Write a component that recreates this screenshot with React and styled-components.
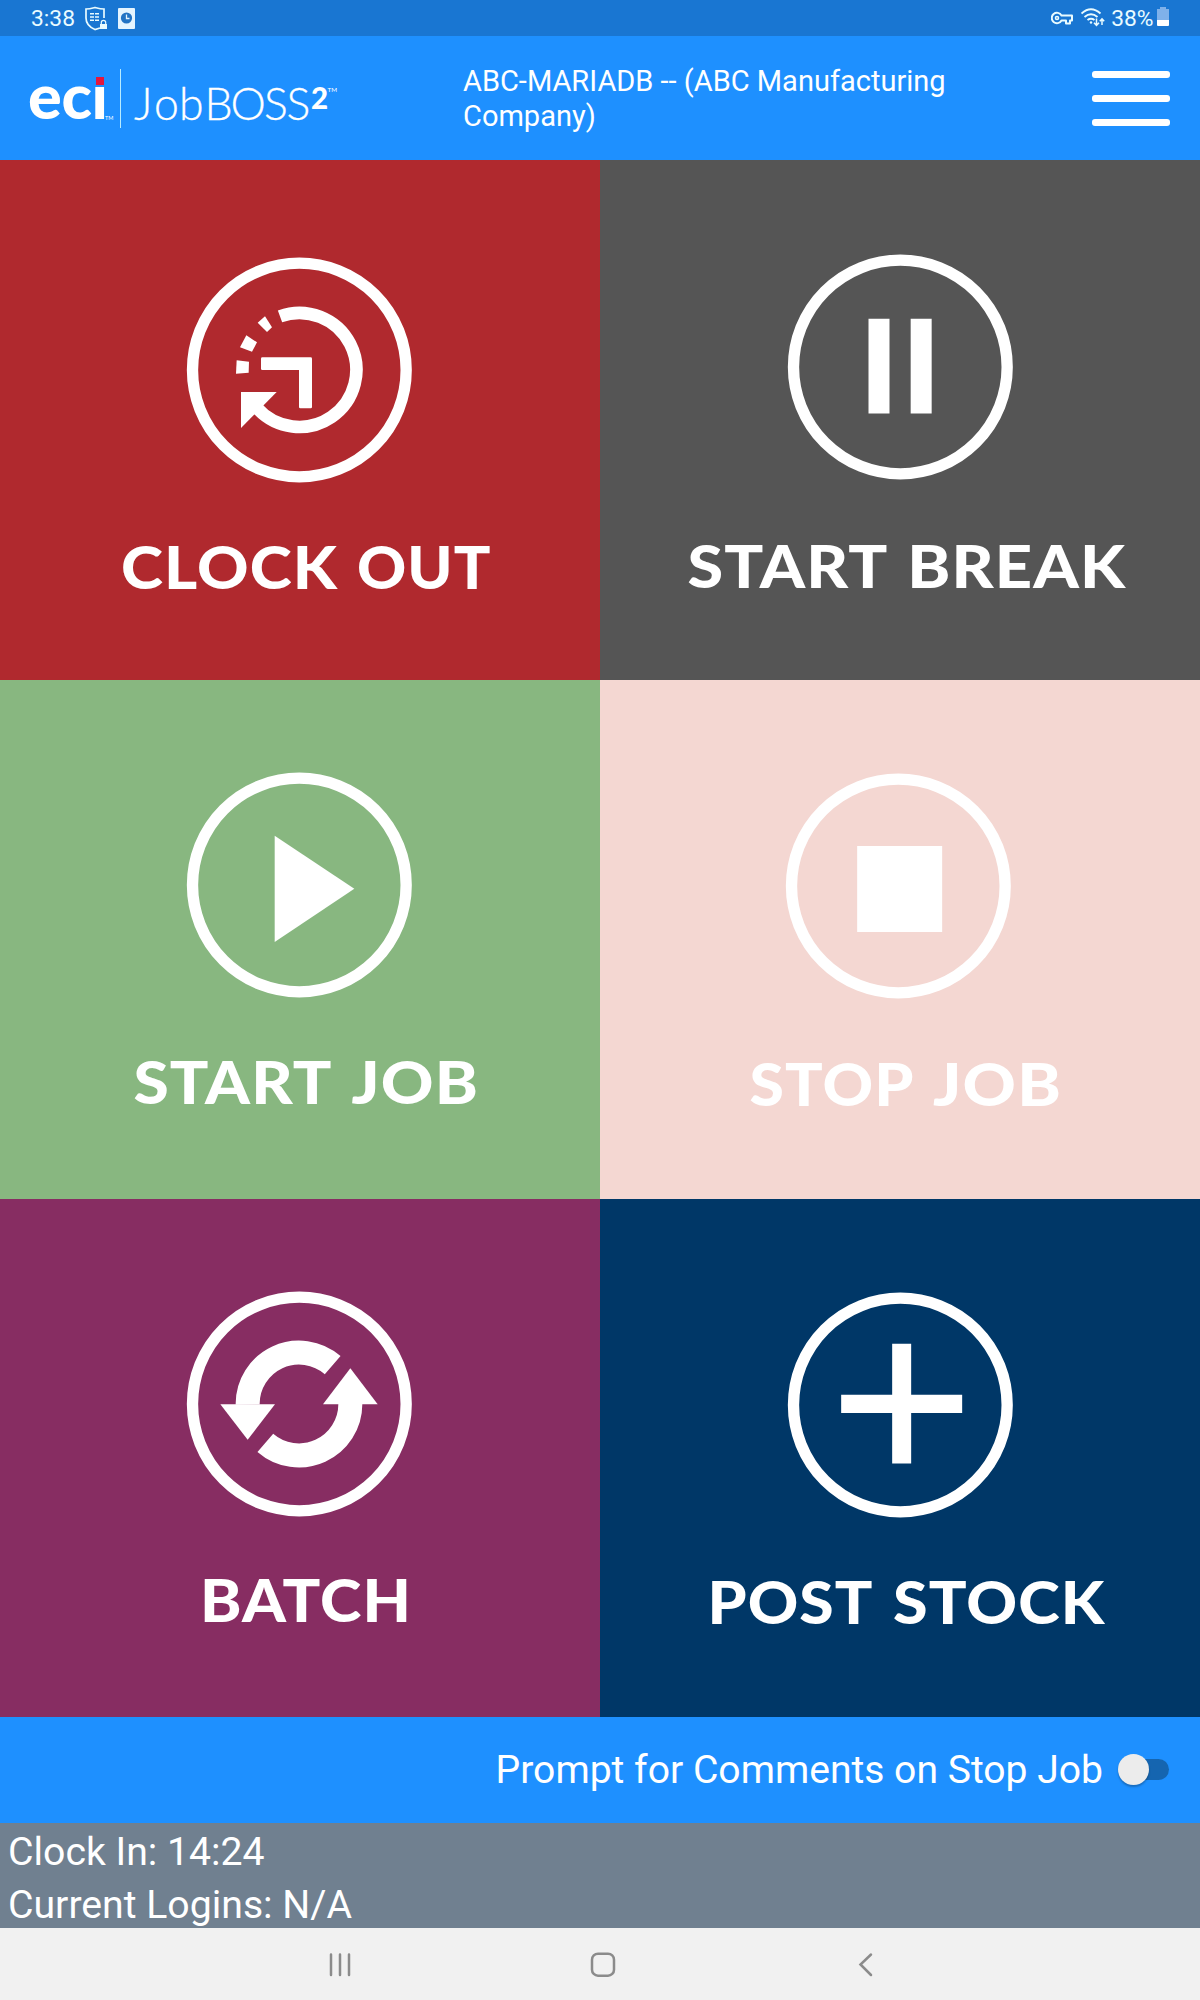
import React, { useState } from "react";
import styled, { createGlobalStyle } from "styled-components";

const GlobalStyle = createGlobalStyle`
  * {
    box-sizing: border-box;
  }

  body {
    margin: 0;
    font-family: Roboto, "Liberation Sans", sans-serif;
    color: #fff;
  }
`;

const Screen = styled.div`
  display: flex;
  flex-direction: column;
  width: 1200px;
  height: 2000px;
  overflow: hidden;
`;

const StatusBar = styled.div`
  display: flex;
  justify-content: space-between;
  height: 36px;
  padding: 0 31px;
  background-color: #1976d2;
  color: #e9fbff;
  font-size: 22.8px;
  line-height: 38px;
`;

const StatusGroup = styled.div`
  display: flex;
  align-items: flex-start;
`;

const StatusIcon = styled.svg`
  display: block;
  flex: none;
  height: 36px;
  margin-left: ${(props) => props.$gap || 0}px;
`;

const BatteryLevel = styled.span`
  margin-left: 6px;
`;

const Header = styled.header`
  display: flex;
  height: 124px;
  background-color: #1e90ff;
`;

const Logo = styled.svg`
  display: block;
  flex: none;
  width: 463px;
  height: 124px;
`;

const Company = styled.div`
  width: 500px;
  padding-top: 28px;
  font-size: 29px;
  line-height: 35.3px;
`;

const MenuButton = styled.button`
  display: flex;
  flex-direction: column;
  gap: 17px;
  width: 78px;
  margin: 35px 30px 0 auto;
  padding: 0;
  border: none;
  background: none;
  cursor: pointer;
`;

const MenuLine = styled.span`
  height: 7px;
  border-radius: 3px;
  background-color: #fff;
`;

const Tiles = styled.main`
  display: grid;
  grid-template-columns: 600px 600px;
  grid-template-rows: 520px 519px 518px;
`;

const Tile = styled.button`
  display: flex;
  flex-direction: column;
  align-items: flex-start;
  padding: ${(props) => props.$top}px 0 0;
  border: none;
  background-color: ${(props) => props.$color};
  cursor: pointer;
`;

const TileIcon = styled.svg`
  display: block;
  width: 230px;
  height: 230px;
  margin-left: ${(props) => props.$left}px;
`;

const TileLabel = styled.svg`
  display: block;
  width: 600px;
  height: 90px;
  margin-top: ${(props) => props.$gap}px;
  overflow: visible;
  font-family: Lato, sans-serif;
  font-size: 58.5px;
  font-weight: 900;
  letter-spacing: 1px;
  fill: #fff;
`;

const PromptBar = styled.div`
  display: flex;
  justify-content: flex-end;
  height: 106px;
  padding: 27px 31px 0 0;
  background-color: #1e90ff;
  font-size: 39.1px;
  line-height: 53px;
`;

const Switch = styled.button`
  display: flex;
  align-items: center;
  width: 51px;
  height: 31px;
  margin: 10px 0 0 15px;
  padding: 0;
  border: none;
  background: none;
  cursor: pointer;
`;

const Track = styled.span`
  display: flex;
  align-items: center;
  width: 46px;
  height: 21px;
  margin-left: 5px;
  border-radius: 11px;
  background-color: #1565b0;
`;

const Thumb = styled.span`
  flex: none;
  width: 31px;
  height: 31px;
  margin-left: ${(props) => (props.$on ? 15 : -5)}px;
  border-radius: 50%;
  background-color: #ececec;
  box-shadow: 0 2px 2px rgba(0, 0, 0, 0.25);
`;

const Info = styled.div`
  height: 105px;
  padding: 3px 0 0 8px;
  background-color: #708090;
  font-size: 39.2px;
  line-height: 53px;
`;

const NavBar = styled.nav`
  display: flex;
  justify-content: center;
  gap: 233px;
  height: 72px;
  padding: 21px 0 0 5px;
  background-color: #f1f1f1;
`;

const NavIcon = styled.svg`
  display: block;
  width: 30px;
  height: 30px;
  fill: none;
  stroke: #8b8b8b;
  stroke-width: 2.5;
  stroke-linecap: round;
`;

const ClockOutGlyph = () => (
  <>
    <path d="M-58 -161 A171 171 0 1 1 -128 113" fill="none" stroke="#fff" strokeWidth="38" />
    <path d="M-175 66 H-68 L-175 174 Z" />
    <path d="M-125 -142 L-103 -161 L-82 -128 L-97 -114 Z" />
    <path d="M-159 -104 L-127 -83 L-142 -55 L-178 -68 Z" />
    <path d="M-188 -29 L-151 -25 L-152 8 L-190 11 Z" />
    <path d="M-111 -38 H34 Q38 -38 38 -34 V111 Q38 115 34 115 H3 Q-1 115 -1 111 V0 H-111 Q-115 0 -115 -4 V-34 Q-115 -38 -111 -38 Z" />
  </>
);

const BatchGlyph = () => (
  <>
    <g fill="none" stroke="#fff" strokeWidth="72">
      <path d="M100 -116.5 A154 154 0 0 0 -155 2" />
      <path d="M-102 116.5 A154 154 0 0 0 153 0" />
    </g>
    <path d="M-237 1 H-73 L-155 107 Z" />
    <path d="M71 1 H235 L153 -107 Z" />
  </>
);

const tiles = [
  {
    id: "clock-out",
    words: [
      { text: "CLOCK", x: 121, width: 217 },
      { text: "OUT", x: 357, width: 134.5 },
    ],
    color: "#b0292e",
    top: 94.5,
    left: 184,
    gap: 35.5,
    glyph: <ClockOutGlyph />,
  },
  {
    id: "start-break",
    words: [
      { text: "START", x: 87.5, width: 201 },
      { text: "BREAK", x: 307.3, width: 219 },
    ],
    color: "#555555",
    top: 92,
    left: 184.8,
    gap: 37,
    glyph: <path d="M-95.5 -144.5 H-32.5 V139.5 H-95.5 Z M31 -144.5 H94 V139.5 H31 Z" />,
  },
  {
    id: "start-job",
    words: [
      { text: "START", x: 133.5, width: 199 },
      { text: "JOB", x: 351.5, width: 127.5 },
    ],
    color: "#88b780",
    top: 90,
    left: 184,
    gap: 35,
    glyph: <path d="M-74 -148 L165 11 L-74 171 Z" />,
  },
  {
    id: "stop-job",
    words: [
      { text: "STOP", x: 149.5, width: 165 },
      { text: "JOB", x: 333, width: 129 },
    ],
    color: "#f4d7d2",
    top: 91,
    left: 183,
    gap: 36,
    glyph: <path d="M-123.5 -120 H131.5 V138 H-123.5 Z" />,
  },
  {
    id: "batch",
    words: [{ text: "BATCH", x: 200, width: 212 }],
    color: "#872d62",
    top: 90,
    left: 184,
    gap: 34,
    glyph: <BatchGlyph />,
  },
  {
    id: "post-stock",
    words: [
      { text: "POST", x: 107.5, width: 166 },
      { text: "STOCK", x: 293, width: 212.5 },
    ],
    color: "#003767",
    top: 90.5,
    left: 184.5,
    gap: 35.5,
    glyph: (
      <path d="M-24.5 -183.5 H32.5 V-31 H185.5 V24 H32.5 V175.5 H-24.5 V24 H-177.5 V-31 H-24.5 Z" />
    ),
  },
];

const ActionTile = ({ tile }) => (
  <Tile $color={tile.color} $top={tile.top}>
    <TileIcon $left={tile.left} viewBox="-346 -345 690 690" fill="#fff">
      <circle r="320.5" fill="none" stroke="#fff" strokeWidth="34" />
      {tile.glyph}
    </TileIcon>
    <TileLabel $gap={tile.gap}>
      {tile.words.map((word) => (
        <text
          key={word.text}
          x={word.x}
          y="69"
          textLength={word.width}
          lengthAdjust="spacingAndGlyphs"
        >
          {word.text}
        </text>
      ))}
    </TileLabel>
  </Tile>
);

const BrandLogo = () => (
  <Logo viewBox="0 36 463 124" fill="#fff" fontFamily="Lato, sans-serif">
    <text x="28 61.5 91.6" y="119" fontSize="63" fontWeight="900">
      eci
    </text>
    <rect x="92" y="66" width="16" height="21" fill="#1e90ff" />
    <rect x="96" y="77" width="8" height="8" fill="#e4173e" />
    <text x="105" y="119.5" fontSize="5.5">
      TM
    </text>
    <rect x="120" y="69" width="1" height="59" fill="#b8ecff" />
    <text
      x="134 154 179 204.5 230.5 264 286.5"
      y="119.5"
      fontSize="44.6"
      fontWeight="300"
      stroke="#fff"
      strokeWidth="0.3"
    >
      JobBOSS
    </text>
    <text x="311" y="108.7" fontSize="29.5" fontWeight="900">
      2
    </text>
    <text x="327.5" y="92" fontSize="6.3">
      TM
    </text>
  </Logo>
);

const App = () => {
  const [prompt, setPrompt] = useState(false);

  return (
    <Screen>
      <GlobalStyle />
      <StatusBar>
        <StatusGroup>
          <span>3:38</span>
          <StatusIcon $gap={10.5} width="22" viewBox="86 0 22 36" fill="none" stroke="#e9fbff">
            <path
              d="M101 28 L96 29.5 C90 27 87 23 87 18 V9 C91 9 94 8 96 7.5 C98 8 101 9 105 9 V18"
              strokeWidth="1.7"
            />
            <path d="M91 13.7 H101 M91 17 H101 M91 20.3 H101" strokeWidth="1.6" strokeDasharray="4 1" />
            <path d="M102.3 24 V22.5 A2.2 2.2 0 0 1 106.7 22.5 V24" strokeWidth="1.2" />
            <rect x="101" y="24" width="7" height="5" fill="#e9fbff" stroke="none" />
          </StatusIcon>
          <StatusIcon $gap={11} width="17" viewBox="119 0 17 36">
            <rect x="119" y="8" width="17" height="21" rx="1" fill="#e4f4ff" />
            <circle cx="127.5" cy="18" r="5.6" fill="#2273c4" />
            <path d="M127.5 14.5 V18.5 H130.5" fill="none" stroke="#e4f4ff" strokeWidth="1.3" />
          </StatusIcon>
        </StatusGroup>
        <StatusGroup>
          <StatusIcon width="22" viewBox="1051 0 22 36" fill="none" stroke="#e9fbff">
            <path
              d="M1061.5 15.5 H1072 V20.5 H1070 V23.5 H1066 V20.5 H1061.5 A5.2 5.2 0 1 1 1061.5 15.5 Z"
              strokeWidth="2"
              strokeLinejoin="round"
            />
            <circle cx="1057" cy="18" r="1.5" strokeWidth="1.6" />
          </StatusIcon>
          <StatusIcon $gap={8} width="24" viewBox="1081 0 24 36" fill="none" stroke="#e9fbff">
            <path
              d="M1081.5 13.5 Q1091 5 1100.5 13.5 M1084.5 17 Q1091 11.5 1097.5 17 M1087.5 20 Q1091 17.5 1094.5 20"
              strokeWidth="1.9"
            />
            <circle cx="1091" cy="22.5" r="1.2" fill="#e9fbff" stroke="none" />
            <path
              d="M1096.5 18.5 V25 M1094 22.7 L1096.5 25.3 L1099 22.7 M1102 25 V19 M1099.8 21.3 L1102 18.8 L1104.2 21.3"
              strokeWidth="1.5"
            />
          </StatusIcon>
          <BatteryLevel>38%</BatteryLevel>
          <StatusIcon $gap={3.5} width="12" viewBox="1157 0 12 36">
            <path d="M1160 7 H1166 V9 H1169 V20 H1157 V9 H1160 Z" fill="#7fb1ea" />
            <path d="M1157 20 H1169 V25 Q1169 26 1168 26 H1158 Q1157 26 1157 25 Z" fill="#fff" />
          </StatusIcon>
        </StatusGroup>
      </StatusBar>

      <Header>
        <BrandLogo />
        <Company>ABC-MARIADB -- (ABC Manufacturing Company)</Company>
        <MenuButton aria-label="Menu">
          <MenuLine />
          <MenuLine />
          <MenuLine />
        </MenuButton>
      </Header>

      <Tiles>
        {tiles.map((tile) => (
          <ActionTile key={tile.id} tile={tile} />
        ))}
      </Tiles>

      <PromptBar>
        <span>Prompt for Comments on Stop Job</span>
        <Switch role="switch" aria-checked={prompt} onClick={() => setPrompt(!prompt)}>
          <Track>
            <Thumb $on={prompt} />
          </Track>
        </Switch>
      </PromptBar>

      <Info>
        <div>Clock In: 14:24</div>
        <div>Current Logins: N/A</div>
      </Info>

      <NavBar>
        <NavIcon viewBox="0 0 30 30">
          <path d="M6 5.5 V26 M15 5.5 V26 M24 5.5 V26" />
        </NavIcon>
        <NavIcon viewBox="0 0 30 30">
          <rect x="4" y="4.7" width="22" height="22" rx="6" />
        </NavIcon>
        <NavIcon viewBox="0 0 30 30">
          <path d="M20 5.5 L9.5 15.5 L20 26" />
        </NavIcon>
      </NavBar>
    </Screen>
  );
};

export default App;
